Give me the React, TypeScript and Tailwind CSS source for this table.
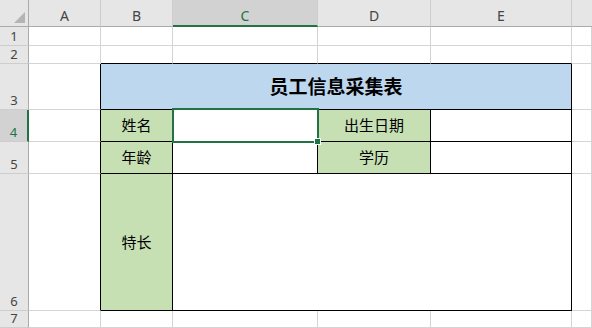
import React from 'react';

const GRID = 'border-r border-b border-[#d4d4d4]';
const COL_HDR = 'bg-[#e6e6e6] border-r border-b border-r-[#cdcdcd] border-b-[#ababab] flex items-end justify-center pb-[3px] text-[14px] leading-none text-[#444]';
const ROW_HDR = 'bg-[#e6e6e6] border-r border-b border-r-[#ababab] border-b-[#cdcdcd] flex items-end justify-center pb-[2px] text-[13px] leading-[13px] text-[#444]';
const LABEL = 'bg-[#c6e0b4] border-r border-b border-black flex items-center justify-center text-[15px] text-black';
const FIELD = 'bg-white border-r border-b border-black';

const hdrFont = { fontFamily: '"Noto Sans", "Open Sans", sans-serif' };

export default function App() {
  return (
    <div
      className="w-[592px] h-[328px] overflow-hidden bg-white grid grid-cols-[29px_72px_72px_145px_113px_141px_1fr] grid-rows-[27px_19px_18px_46px_32px_32px_137px_1fr]"
      style={{ fontFamily: '"Noto Sans CJK SC", "Noto Sans", sans-serif' }}
    >
      {/* column headers */}
      <div className="relative bg-[#e6e6e6] border-r border-b border-r-[#ababab] border-b-[#ababab]">
        <div className="absolute right-[3px] bottom-[3px] w-0 h-0 border-l-[11px] border-l-transparent border-b-[11px] border-b-[#b4b4b4]" />
      </div>
      <div className={COL_HDR} style={hdrFont}>A</div>
      <div className={COL_HDR} style={hdrFont}>B</div>
      <div
        className="bg-[#d2d2d2] border-r border-r-[#cdcdcd] border-b-2 border-b-[#217346] flex items-end justify-center pb-[2px] text-[14px] leading-none text-[#217346]"
        style={hdrFont}
      >
        C
      </div>
      <div className={COL_HDR} style={hdrFont}>D</div>
      <div className={COL_HDR} style={hdrFont}>E</div>
      <div className="bg-[#e6e6e6] border-b border-b-[#ababab]" />

      {/* row 1 */}
      <div className={ROW_HDR} style={hdrFont}>1</div>
      <div className={GRID} />
      <div className={GRID} />
      <div className={GRID} />
      <div className={GRID} />
      <div className={GRID} />
      <div className={GRID} />

      {/* row 2 */}
      <div className={ROW_HDR} style={hdrFont}>2</div>
      <div className={GRID} />
      <div className={`${GRID} border-b-black`} />
      <div className={`${GRID} border-b-black`} />
      <div className={`${GRID} border-b-black`} />
      <div className={`${GRID} border-b-black`} />
      <div className={GRID} />

      {/* row 3: title */}
      <div className={ROW_HDR} style={hdrFont}>3</div>
      <div className={`${GRID} border-r-black`} />
      <div className="col-span-4 bg-[#bdd7ee] border-r border-b border-black flex items-center justify-center text-[19px] font-bold text-black">
        员工信息采集表
      </div>
      <div className={GRID} />

      {/* row 4 */}
      <div
        className="bg-[#d2d2d2] border-b border-b-[#cdcdcd] border-r-2 border-r-[#217346] flex items-end justify-center pb-[2px] text-[13px] leading-[13px] text-[#217346]"
        style={hdrFont}
      >
        4
      </div>
      <div className={`${GRID} border-r-black`} />
      <div className={LABEL}>姓名</div>
      <div className={`${FIELD} relative`}>
        {/* active cell */}
        <div className="absolute left-[-1px] top-[-2px] right-[-2px] bottom-[-2px] border-2 border-[#217346]" />
        <div className="absolute right-[-4px] bottom-[-4px] w-[7px] h-[7px] bg-[#217346] border border-white" />
      </div>
      <div className={LABEL}>出生日期</div>
      <div className={FIELD} />
      <div className={GRID} />

      {/* row 5 */}
      <div className={ROW_HDR} style={hdrFont}>5</div>
      <div className={`${GRID} border-r-black`} />
      <div className={LABEL}>年龄</div>
      <div className={FIELD} />
      <div className={LABEL}>学历</div>
      <div className={FIELD} />
      <div className={GRID} />

      {/* row 6 */}
      <div className={ROW_HDR} style={hdrFont}>6</div>
      <div className={`${GRID} border-r-black`} />
      <div className={LABEL}>特长</div>
      <div className={`${FIELD} col-span-3`} />
      <div className={GRID} />

      {/* row 7 */}
      <div className={ROW_HDR} style={hdrFont}>7</div>
      <div className={GRID} />
      <div className={GRID} />
      <div className={GRID} />
      <div className={GRID} />
      <div className={GRID} />
      <div className={GRID} />
    </div>
  );
}
